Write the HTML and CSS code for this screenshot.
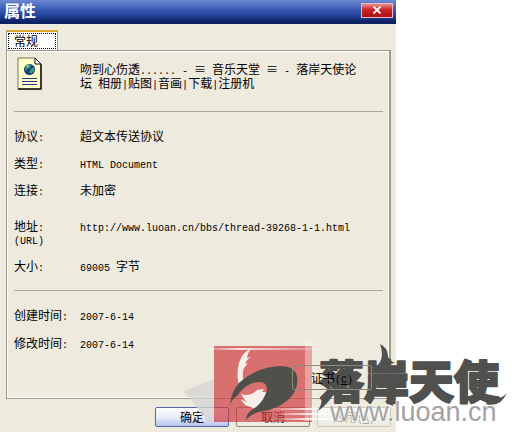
FILE: index.html
```html
<!DOCTYPE html>
<html lang="zh-CN">
<head>
  <meta charset="UTF-8">
  <title>属性</title>
  <meta name="viewport" content="width=device-width, initial-scale=1.0">
  <link rel="stylesheet" href="styles.css">
</head>
<body>
  <div class="dialog">
    <div class="titlebar">
      <h1>属性</h1>
      <button class="close" aria-label="关闭">
        <svg width="10" height="8" viewBox="0 0 10 8"><path d="M1.5 0.5 8.500 7.500M8.500 0.500 1.500 7.500" stroke="#fff" stroke-width="1.800"/></svg>
      </button>
    </div>

    <div class="content">
      <button class="tab"><span>常规</span></button>

      <div class="panel">
        <div class="head">
          <svg class="page-icon" width="26" height="34" viewBox="0 0 26 34">
            <path d="M1 1h17l6 6v25H1z" fill="#ffffc8" stroke="#77775c"/>
            <path d="M24 7v25H1" fill="none" stroke="#111" stroke-width="1.500"/>
            <path d="M18 1v6h6z" fill="#fff" stroke="#111"/>
            <circle cx="12.500" cy="12.500" r="5.500" fill="#163a86"/>
            <path d="M8 10q3-4 6-2l-1 3-3 1-1 3zM14 12l3-2v4l-3 3-2-2z" fill="#3f9a66"/>
            <path d="M9 9l3-1-1 2z" fill="#b9e4ef"/>
            <path d="M5 21.500h15M5 24.500h15M5 27.500h15" stroke="#26348c" stroke-width="1.200"/>
          </svg>
          <p>吻到心伤透<span class="en">...... - </span>≡<span class="en"> </span>音乐天堂<span class="en"> </span>≡<span class="en"> - </span>落岸天使论<br>坛<span class="en"> </span>相册<span class="en">|</span>贴图<span class="en">|</span>音画<span class="en">|</span>下载<span class="en">|</span>注册机</p>
        </div>

        <dl class="info">
          <div><dt>协议<span class="en">:</span></dt><dd>超文本传送协议</dd></div>
          <div><dt>类型<span class="en">:</span></dt><dd><span class="en">HTML Document</span></dd></div>
          <div><dt>连接<span class="en">:</span></dt><dd>未加密</dd></div>
          <div class="address"><dt>地址<span class="en">:</span><br><span class="en">(URL)</span></dt><dd><span class="en">http://www.luoan.cn/bbs/thread-39268-1-1.html</span></dd></div>
          <div><dt>大小<span class="en">:</span></dt><dd><span class="en">69005 </span>字节</dd></div>
        </dl>

        <dl class="info dates">
          <div><dt>创建时间<span class="en">:</span></dt><dd><span class="en">2007-6-14</span></dd></div>
          <div><dt>修改时间<span class="en">:</span></dt><dd><span class="en">2007-6-14</span></dd></div>
        </dl>

        <button class="btn cert">证书<span class="en">(<u>C</u>)</span></button>
      </div>

      <div class="actions">
        <button class="btn default">确定</button>
        <button class="btn">取消</button>
        <button class="btn" disabled>应用<span class="en">(<u>A</u>)</span></button>
      </div>
    </div>
  </div>

  <svg class="watermark" width="332" height="96" viewBox="180 336 332 96">
    <defs>
      <linearGradient id="streak">
        <stop offset="0" stop-color="#fff" stop-opacity="0"/>
        <stop offset="0.3" stop-color="#fff" stop-opacity="0.8"/>
        <stop offset="1" stop-color="#fff" stop-opacity="0.1"/>
      </linearGradient>
    </defs>
    <path d="M184 391 214 379V422H208z" fill="#d6d5d2" fill-opacity="0.8"/>
    <rect x="214" y="346" width="98" height="76" fill="#cf3c40" fill-opacity="0.7"/>
    <path d="M251 349Q243 351 239 363Q235 378 241 389L245 387Q241 374 244 368L248 363 245 364Q247 359 251 357L247 358Q248 352 251 349z" fill="#f6eee8"/>
    <path d="M241 394Q251 397 257 390L264 389 262 392 268 392Q264 397 263 403Q257 410 250 407Q242 404 241 399L246 402 241 394z" fill="#f6eee8"/>
    <path d="M230 405Q231 391 240 382Q257 367 280 366Q294 365 297 376Q299 390 288 400Q277 409 264 411Q253 412 246 420Q246 412 255 408Q264 401 267 390Q267 381 258 382Q246 383 237 396Q232 399 230 405z" fill="#50504b"/>
    <rect x="202" y="348" width="126" height="2" fill="url(#streak)"/>
    <rect x="305" y="341" width="7" height="80" fill="#fff" fill-opacity="0.35"/>
    <path d="M270 408h120v2H270zM280 413h110v2H280zM274 418h120v2H274z" fill="url(#streak)"/>
    <g fill="#50504f" stroke="#50504f" stroke-linejoin="round">
      <text class="brand" x="319" y="399">落岸天使</text>
      <path d="M380 344Q388 348 388 356Q389 361 395 363L377 366Q385 358 380 344zM317 411Q322 407 322 395L329 398Q325 408 317 411zM488 398Q500 401 507 393Q500 408 486 404zM388 398Q393 399 393 406L385 402z" stroke="none"/>
    </g>
    <text class="site" x="330" y="421">www.luoan.cn</text>
  </svg>
</body>
</html>
```
FILE: styles.css
```css
* {
  box-sizing: border-box;
}

body {
  margin: 0;
  position: relative;
  background: #fff;
  color: #000;
  font: 12px/14px "Noto Sans CJK SC", sans-serif;
}

.en {
  font-family: "Liberation Mono", monospace;
  font-size: 10px;
  line-height: 8px;
  white-space: pre;
}

button {
  font: inherit;
  color: inherit;
  padding: 0;
}

.dialog {
  width: 100%;
  max-width: 396px;
  min-height: 100vh;
  background: #eeeade;
}

.titlebar {
  display: flex;
  align-items: center;
  justify-content: space-between;
  height: 24px;
  padding: 0 3px 4px 4px;
  background: linear-gradient(#6d89d2, #3f60b8 35%, #24429a 65%, #0c2264 90%);
}

.titlebar h1 {
  margin: 0;
  color: #fff;
  font-size: 16px;
  line-height: 20px;
}

.close {
  display: flex;
  align-items: center;
  justify-content: center;
  width: 32px;
  height: 15px;
  border: 1px solid #e8b8c0;
  background: linear-gradient(#e89090, #cc2222 45%, #a81018);
}

.content {
  padding: 6px 5px 6px 6px;
}

.tab {
  display: block;
  width: 52px;
  height: 20px;
  padding: 1px;
  border: 1px solid #919b9c;
  border-top: 2px solid #dca32c;
  border-bottom: 0;
  background: #fff;
  text-align: left;
}

.tab span {
  display: block;
  height: 16px;
  padding-left: 5px;
  border: 1px dotted #000;
  line-height: 13px;
}

.panel {
  display: flex;
  flex-direction: column;
  padding: 6px 6px 8px 7px;
  border: 1px solid #9c9a8c;
  border-right-width: 2px;
  box-shadow: inset 1px 1px #fff, inset -1px -1px #fff;
}

.head {
  display: flex;
  gap: 37px;
  height: 54px;
  padding-left: 3px;
}

.head p {
  margin: 5px 0 0;
  white-space: nowrap;
}

.info {
  display: flex;
  flex-direction: column;
  gap: 13px;
  margin: 0;
  padding: 17px 0;
  border-top: 1px solid #aca899;
}

.info div {
  display: flex;
}

.info dt {
  width: 66px;
}

.info dd {
  margin: 0;
}

.info .address {
  padding-top: 10px;
  line-height: 12px;
}

.btn {
  width: 74px;
  height: 20px;
  border: 1px solid #8c8b80;
  border-radius: 2px;
  background: linear-gradient(#fafaf7, #eceadf);
  line-height: 14px;
}

.btn.default {
  border-color: #5269a5;
  background: linear-gradient(#fff, #e6eaf8 55%, #b3c3ef);
}

.btn:disabled {
  border-color: #c9c7ba;
  color: #aca899;
}

.cert {
  position: relative;
  z-index: 1;
  align-self: flex-end;
  width: 80px;
  height: 25px;
  margin-right: 11px;
  background: transparent;
}

.dates {
  gap: 14px;
  padding-bottom: 15px;
}

.actions {
  display: flex;
  justify-content: flex-end;
  gap: 7px;
  padding-top: 8px;
}

/* site stamp laid over the corner of the dialog */
.watermark {
  position: absolute;
  left: 180px;
  top: 336px;
  pointer-events: none;
}

.brand {
  font-family: "Noto Sans CJK SC", sans-serif;
  font-size: 45px;
  font-weight: 900;
  stroke-width: 2px;
}

.site {
  font-family: "Liberation Sans", sans-serif;
  font-size: 27px;
  fill: #a3a3a3;
  stroke: #fff;
  stroke-width: 1px;
  paint-order: stroke;
}
```
